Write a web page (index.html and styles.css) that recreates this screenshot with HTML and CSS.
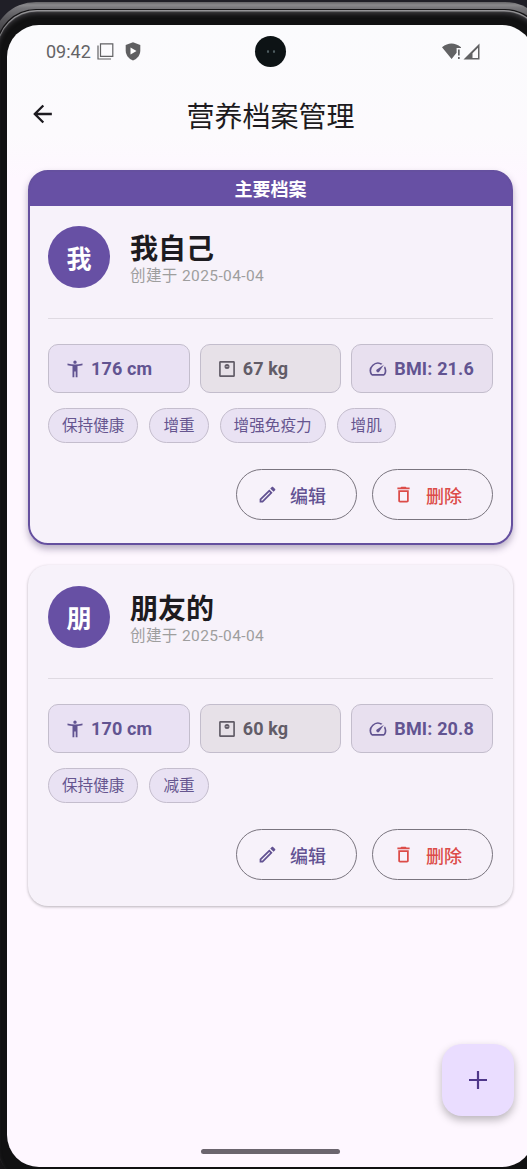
FILE: index.html
```
<!DOCTYPE html>
<html lang="zh-CN">
<head>
<meta charset="utf-8">
<title>营养档案管理</title>
<link rel="stylesheet" href="styles.css">
</head>
<body>
<svg class="defs" width="0" height="0">
  <symbol id="person" viewBox="0 0 24 24"><path d="M21 5.500c-3 .8-6 1-9 1s-6-.2-9-1V7.500c2 .6 4 .9 6 1V22h2.200v-7h1.600v7H15V8.500c2-.1 4-.4 6-1zM12 5.800c1.100 0 2-.9 2-2s-.9-2-2-2-2 .9-2 2 .9 2 2 2z"/></symbol>
  <symbol id="scale" viewBox="0 0 24 24"><path fill-rule="evenodd" d="M19.500 2.500h-15c-1.100 0-2 .7-2 1.500v16c0 .8.9 1.500 2 1.500h15c1.100 0 2-.7 2-1.500V4c0-.8-.9-1.500-2-1.500zm0 17h-15v-15h15v15zM12 6a3 3 0 1 0 0 6 3 3 0 0 0 0-6zm-1.400 2.500h.8v1h-.8zm2 0h.8v1h-.8z"/></symbol>
  <symbol id="speed" viewBox="0 0 24 24"><path d="M20.380 8.570l-1.230 1.850a8 8 0 0 1-.22 7.580H5.070A8 8 0 0 1 15.580 6.850l1.850-1.230A10 10 0 0 0 3.350 19a2 2 0 0 0 1.720 1h13.850a2 2 0 0 0 1.740-1 10 10 0 0 0-.27-10.440zm-9.790 6.840a2 2 0 0 0 2.830 0l5.660-8.490-8.490 5.660a2 2 0 0 0 0 2.830z"/></symbol>
  <symbol id="edit" viewBox="0 0 24 24"><path d="M14.060 9.020l.92.92L5.920 19H5v-.92l9.060-9.060M17.660 3c-.25 0-.51.1-.7.29l-1.830 1.830 3.750 3.750 1.830-1.830c.39-.39.39-1.020 0-1.410l-2.340-2.340c-.2-.2-.45-.29-.71-.29zm-3.600 3.190L3 17.250V21h3.750L17.810 9.940l-3.750-3.750z"/></symbol>
  <symbol id="trash" viewBox="0 0 24 24"><path d="M6 19c0 1.100.9 2 2 2h8c1.100 0 2-.9 2-2V7H6v12zM8 9h8v10H8V9zm7.500-5l-1-1h-5l-1 1H5v2h14V4h-3.500z"/></symbol>
</svg>
<div class="stage">
<div class="frame"><div class="rim"><div class="bezel">
<div class="screen">
  <div class="status">
    <span class="time">09:42</span>
    <svg class="copy" width="17" height="17" viewBox="0 0 17 17" fill="none" stroke="#626264"><path d="M3.500 .8H15.800V13.400H3.500zM1 2.500V16H14" stroke-width="1.200"/></svg>
    <svg class="shield" width="16" height="19" viewBox="0 0 16 19"><path d="M8 .3L15.300 3V8.500C15.300 13 12.200 17 8 18.500 3.800 17 .7 13 .7 8.500V3z" fill="#5f5f61"/><path d="M5.500 5.500L11.500 9 5.500 12.500z" fill="#fff"/></svg>
    <svg class="signal" width="38" height="17" viewBox="0 0 38 17" fill="#626264"><path d="M0 4.200Q9.500-3.300 19 4.200V5H14.600V9.800L9.600 16z"/><path d="M16 6.500h1.700v6H16zM16 14h1.700v2H16z"/><path fill-rule="evenodd" d="M21.500 16.500L37.500 .5V16.500zM30.500 10.200V15H36V4.800z"/></svg>
    <span class="camera"><i></i><i></i></span>
  </div>
  <header class="appbar">
    <svg class="back" width="29" height="28" viewBox="0 0 24 24"><path d="M20 11H7.830l5.590-5.590L12 4l-8 8 8 8 1.410-1.410L7.830 13H20v-2z"/></svg>
    <h1>营养档案管理</h1>
  </header>
  <main class="list">
    <article class="card primary">
      <div class="banner">主要档案</div>
      <div class="body">
        <div class="profile"><div class="avatar">我</div><div><h2>我自己</h2><p class="date">创建于 2025-04-04</p></div></div>
        <hr>
        <div class="stats">
          <div class="stat"><svg><use href="#person"/></svg>176 cm</div>
          <div class="stat grey"><svg><use href="#scale"/></svg>67 kg</div>
          <div class="stat bmi"><svg><use href="#speed"/></svg>BMI: 21.6</div>
        </div>
        <div class="chips"><span>保持健康</span><span>增重</span><span>增强免疫力</span><span>增肌</span></div>
        <div class="actions"><button class="edit"><svg><use href="#edit"/></svg>编辑</button><button class="delete"><svg><use href="#trash"/></svg>删除</button></div>
      </div>
    </article>
    <article class="card">
      <div class="body">
        <div class="profile"><div class="avatar">朋</div><div><h2>朋友的</h2><p class="date">创建于 2025-04-04</p></div></div>
        <hr>
        <div class="stats">
          <div class="stat"><svg><use href="#person"/></svg>170 cm</div>
          <div class="stat grey"><svg><use href="#scale"/></svg>60 kg</div>
          <div class="stat bmi"><svg><use href="#speed"/></svg>BMI: 20.8</div>
        </div>
        <div class="chips"><span>保持健康</span><span>减重</span></div>
        <div class="actions"><button class="edit"><svg><use href="#edit"/></svg>编辑</button><button class="delete"><svg><use href="#trash"/></svg>删除</button></div>
      </div>
    </article>
  </main>
  <button class="fab"><svg width="18" height="18" viewBox="0 0 18 18"><path d="M9 0V18M0 9H18" stroke="#4f378a" stroke-width="2.200"/></svg></button>
  <div class="home"></div>
</div>
</div></div></div>
</div>
</body>
</html>
```
FILE: styles.css
```
* { box-sizing: border-box; }
body { margin: 0; font-family: Roboto, "Noto Sans CJK SC", sans-serif; color: #1d1b20; }
.defs { display: block; height: 0; }
h1, h2, p, hr { margin: 0; }
button { font: inherit; margin: 0; }
.stage { width: 527px; height: 1169px; overflow: hidden; background: #201f27; padding-top: 2px; }
.frame { width: 557px; height: 1190px; margin-left: -8px; border-radius: 44px; padding: 7px 4px; background: linear-gradient(#666568 0, #8a898c 3px, #77767a 6px, #5a595d 16px, #333236 40px, #161517 70px); }
.rim { height: 1176px; border-radius: 40px; padding: 1px; background: #161517; }
.bezel { height: 1174px; border-radius: 40px; padding: 15px 10px 0; background: #111112; box-shadow: inset 0 1.500px 1px #9a999c, inset 0 4px 4px #38373b; }
.screen { position: relative; width: 527px; height: 1142px; border-radius: 32px; overflow: hidden; background: linear-gradient(#fbfbfd 0, #fcfafd 110px, #fef7ff 155px); display: flex; flex-direction: column; }
.status { position: relative; flex: none; height: 52px; display: flex; align-items: center; padding: 1px 54px 0 39px; color: #646466; }
.time { font-size: 18px; width: 51px; }
.shield { margin-left: 11px; }
.signal { margin-left: auto; }
.camera { position: absolute; left: 248px; top: 11px; width: 31px; height: 31px; border-radius: 50%; background: #0d1315; display: flex; gap: 4px; align-items: center; justify-content: center; }
.camera i { width: 2px; height: 3px; border-radius: 50%; background: #526064; }
.appbar { flex: none; height: 93px; display: grid; grid-template-columns: 60px 1fr 60px; align-items: start; padding-top: 22px; }
.back { margin: 1px 0 0 21px; fill: #1d1b20; }
h1 { font-size: 28px; font-weight: 400; line-height: 34px; margin-top: 2px; text-align: center; }
.list { display: flex; flex-direction: column; gap: 20px; padding: 0 20px 0 21px; }
.card { width: 485px; border-radius: 20px; background: #f7f2fa; box-shadow: 0 1px 3px rgba(0,0,0,.28); overflow: hidden; }
.primary { border: 2px solid #65509f; background: linear-gradient(#6750a4 34px, #f7f2fa 34px); box-shadow: 0 4px 7px rgba(50,35,80,.34); }
.banner { height: 34px; background: #6750a4; color: #fff; font-size: 18px; line-height: 35px; font-weight: 700; text-align: center; }
.body { padding: 21px 20px 26px; }
.primary .body { padding: 20px 18px 23px; }
.profile { display: flex; gap: 20px; height: 61px; }
.avatar { width: 62px; height: 62px; border-radius: 50%; background: #6750a4; color: #fff; font-size: 25px; font-weight: 700; line-height: 67px; text-align: center; }
h2 { font-size: 28px; line-height: 34px; margin-top: 7px; font-weight: 700; }
.date { font-size: 15.500px; line-height: 20px; margin-top: -1px; color: #9e9e9e; letter-spacing: .4px; }
hr { border: 0; height: 1px; background: #dfdae2; margin: 31px 0 25px; }
.stats { display: grid; grid-template-columns: repeat(3, 1fr); gap: 10px; }
.stat { height: 49px; border: 1.500px solid #c3bdcc; border-radius: 10px; background: #e9e1f3; font-size: 18px; font-weight: 700; letter-spacing: .15px; display: flex; align-items: center; padding-left: 16px; gap: 6px; white-space: nowrap; color: #625491; }
.stat svg { width: 20px; height: 20px; fill: currentColor; flex: none; }
.grey { background: #e7e1e8; color: #625c67; }
.bmi { background: #e8e0ef; }
.chips { display: flex; gap: 11px; margin-top: 15px; height: 35px; }
.chips span { border: 1.500px solid #c4bdcd; border-radius: 18px; background: #e9e2f3; color: #65558f; font-size: 15.600px; line-height: 35px; padding: 0 13px; }
.actions { display: flex; justify-content: flex-end; gap: 15px; margin-top: 26px; }
.actions button { width: 121px; height: 51px; border: 1px solid #79747e; border-radius: 26px; background: none; display: flex; align-items: center; justify-content: center; gap: 12px; font-size: 18px; font-weight: 500; padding: 0 10px 0 0; }
.actions svg { width: 21px; height: 21px; fill: currentColor; }
.edit { color: #625292; }
.actions .delete { color: #dc4c49; }
.fab { position: absolute; left: 435px; top: 1019px; width: 72px; height: 72px; border: 0; border-radius: 20px; background: #eaddff; display: grid; place-items: center; box-shadow: 0 4px 8px rgba(0,0,0,.27); }
.home { position: absolute; left: 194px; bottom: 13px; width: 139px; height: 5px; border-radius: 3px; background: #6b656e; }
```
